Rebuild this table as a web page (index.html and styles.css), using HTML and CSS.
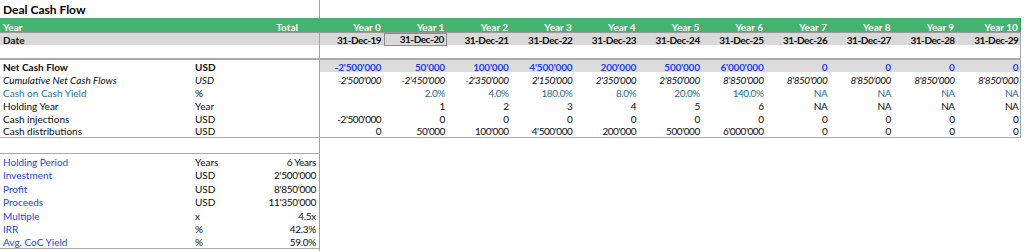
FILE: index.html
```html
<!DOCTYPE html>
<html>
<head>
<meta charset="utf-8">
<link rel="stylesheet" href="styles.css">
</head>
<body>
<div class="sheet">
  <div class="row title-row">
    <div class="title">Deal Cash Flow</div>
    <div class="tot"></div>
  </div>

  <div class="row hdr">
    <div class="lbl">Year</div><div class="unit"></div><div class="tot">Total</div>
    <div class="yc">Year 0</div><div class="yc">Year 1</div><div class="yc">Year 2</div><div class="yc">Year 3</div><div class="yc">Year 4</div><div class="yc">Year 5</div><div class="yc">Year 6</div><div class="yc">Year 7</div><div class="yc">Year 8</div><div class="yc">Year 9</div><div class="yc last">Year 10</div>
  </div>

  <div class="row date">
    <div class="lbl">Date</div><div class="unit"></div><div class="tot"></div>
    <div class="yc">31-Dec-19</div><div class="yc boxed">31-Dec-20</div><div class="yc">31-Dec-21</div><div class="yc">31-Dec-22</div><div class="yc">31-Dec-23</div><div class="yc">31-Dec-24</div><div class="yc">31-Dec-25</div><div class="yc">31-Dec-26</div><div class="yc">31-Dec-27</div><div class="yc">31-Dec-28</div><div class="yc last">31-Dec-29</div>
  </div>

  <div class="row blank">
    <div class="lbl"></div><div class="unit"></div><div class="tot"></div>
    <div class="yc"></div><div class="yc"></div><div class="yc"></div><div class="yc"></div><div class="yc"></div><div class="yc"></div><div class="yc"></div><div class="yc"></div><div class="yc"></div><div class="yc"></div><div class="yc last"></div>
  </div>

  <div class="row body ncf">
    <div class="lbl">Net Cash Flow</div><div class="unit">USD</div><div class="tot"></div>
    <div class="yc">-2'500'000</div><div class="yc">50'000</div><div class="yc">100'000</div><div class="yc">4'500'000</div><div class="yc">200'000</div><div class="yc">500'000</div><div class="yc">6'000'000</div><div class="yc">0</div><div class="yc">0</div><div class="yc">0</div><div class="yc last">0</div>
  </div>

  <div class="row body cum">
    <div class="lbl">Cumulative Net Cash Flows</div><div class="unit">USD</div><div class="tot"></div>
    <div class="yc">-2'500'000</div><div class="yc">-2'450'000</div><div class="yc">-2'350'000</div><div class="yc">2'150'000</div><div class="yc">2'350'000</div><div class="yc">2'850'000</div><div class="yc">8'850'000</div><div class="yc">8'850'000</div><div class="yc">8'850'000</div><div class="yc">8'850'000</div><div class="yc last">8'850'000</div>
  </div>

  <div class="row body coc">
    <div class="lbl">Cash on Cash Yield</div><div class="unit">%</div><div class="tot"></div>
    <div class="yc"></div><div class="yc">2.0%</div><div class="yc">4.0%</div><div class="yc">180.0%</div><div class="yc">8.0%</div><div class="yc">20.0%</div><div class="yc">140.0%</div><div class="yc">NA</div><div class="yc">NA</div><div class="yc">NA</div><div class="yc last">NA</div>
  </div>

  <div class="row body">
    <div class="lbl">Holding Year</div><div class="unit">Year</div><div class="tot"></div>
    <div class="yc"></div><div class="yc">1</div><div class="yc">2</div><div class="yc">3</div><div class="yc">4</div><div class="yc">5</div><div class="yc">6</div><div class="yc">NA</div><div class="yc">NA</div><div class="yc">NA</div><div class="yc last">NA</div>
  </div>

  <div class="row body">
    <div class="lbl">Cash injections</div><div class="unit">USD</div><div class="tot"></div>
    <div class="yc">-2'500'000</div><div class="yc">0</div><div class="yc">0</div><div class="yc">0</div><div class="yc">0</div><div class="yc">0</div><div class="yc">0</div><div class="yc">0</div><div class="yc">0</div><div class="yc">0</div><div class="yc last">0</div>
  </div>

  <div class="row body endrow">
    <div class="lbl">Cash distributions</div><div class="unit">USD</div><div class="tot"></div>
    <div class="yc">0</div><div class="yc">50'000</div><div class="yc">100'000</div><div class="yc">4'500'000</div><div class="yc">200'000</div><div class="yc">500'000</div><div class="yc">6'000'000</div><div class="yc">0</div><div class="yc">0</div><div class="yc">0</div><div class="yc last">0</div>
  </div>

  <div class="row gap">
    <div class="lbl"></div><div class="unit"></div><div class="tot"></div>
  </div>

  <div class="summary">
    <div class="row srow"><div class="lbl">Holding Period</div><div class="unit">Years</div><div class="tot val">6 Years</div></div>
    <div class="row srow"><div class="lbl">Investment</div><div class="unit">USD</div><div class="tot val">2'500'000</div></div>
    <div class="row srow"><div class="lbl">Profit</div><div class="unit">USD</div><div class="tot val">8'850'000</div></div>
    <div class="row srow"><div class="lbl">Proceeds</div><div class="unit">USD</div><div class="tot val">11'350'000</div></div>
    <div class="row srow"><div class="lbl">Multiple</div><div class="unit">x</div><div class="tot val">4.5x</div></div>
    <div class="row srow"><div class="lbl">IRR</div><div class="unit">%</div><div class="tot val">42.3%</div></div>
    <div class="row srow"><div class="lbl">Avg. CoC Yield</div><div class="unit">%</div><div class="tot val">59.0%</div></div>
  </div>

  <div class="row tail">
    <div class="lbl"></div><div class="unit"></div><div class="tot"></div>
  </div>
</div>
</body>
</html>
```

FILE: styles.css
```css
* { box-sizing: border-box; }

html, body {
  margin: 0;
  padding: 0;
  background: #ffffff;
}

body {
  font-family: Lato, "Open Sans", "Liberation Sans", sans-serif;
  font-size: 10px;
  color: #0d0d0d;
  width: 1024px;
  height: 251px;
  overflow: hidden;
}

.sheet {
  width: 1021px;
}

.row {
  display: grid;
  grid-template-columns: 195px 60px 65px repeat(11, 63.727px);
  height: 13.2px;
}

.row > div {
  display: flex;
  align-items: flex-end;
  padding-bottom: 0.5px;
  line-height: 10px;
  white-space: nowrap;
  min-width: 0;
}

.lbl { padding-left: 3px; }
.unit { padding-left: 0; }

.tot {
  justify-content: flex-end;
  border-right: 1px solid #a3a3a3;
}

.yc {
  justify-content: flex-end;
  padding-right: 2.5px;
  letter-spacing: -0.45px;
}

.yc.last {
  border-right: 1px solid #a3a3a3;
  padding-right: 1.5px;
}

/* title */
.title-row {
  height: 18px;
}
.title-row .title {
  grid-column: 1 / span 2;
  font-size: 12px;
  font-weight: 700;
  line-height: 13px;
  padding-left: 3px;
  padding-bottom: 2px;
  color: #000;
}

/* green header */
.hdr {
  height: 14px;
  background: #44b36d;
  color: #ffffff;
  font-weight: 700;
}
.hdr .yc { letter-spacing: 0; padding-right: 3px; }
.hdr .tot {
  border-right: none;
  padding-right: 22px;
}
.hdr .yc.last { border-right-color: #3a9a5e; padding-right: 2px; }

/* date row */
.date {
  height: 13px;
  background: #d9d9d9;
  border-top: 1px solid #9a9a9a;
  font-weight: 700;
  color: #111;
}
.date .yc.boxed {
  border: 1px solid #8a8a8a;
}

.blank {
  height: 13px;
}

.ncf {
  height: 14px;
  border-top: 2px solid #ababab;
  font-weight: 700;
}
.ncf .yc {
  background: #dcdcdc;
  color: #1d3dff;
  letter-spacing: -0.2px;
}

.cum {
  font-style: italic;
}

.coc .lbl,
.coc .yc {
  color: #2d6f8e;
}

.endrow {
  border-bottom: 1px solid #a8a8a8;
}

.gap {
  height: 15px;
}

/* summary */
.summary {
  width: 320px;
  border-top: 1px solid #a8a8a8;
  border-bottom: 1px solid #a8a8a8;
}
.srow {
  grid-template-columns: 195px 60px 65px;
  height: 13.43px;
}
.srow .lbl { color: #2447d8; }
.srow .val { padding-right: 3px; letter-spacing: -0.3px; }

.tail {
  grid-template-columns: 195px 60px 65px;
  height: 4px;
}
```
